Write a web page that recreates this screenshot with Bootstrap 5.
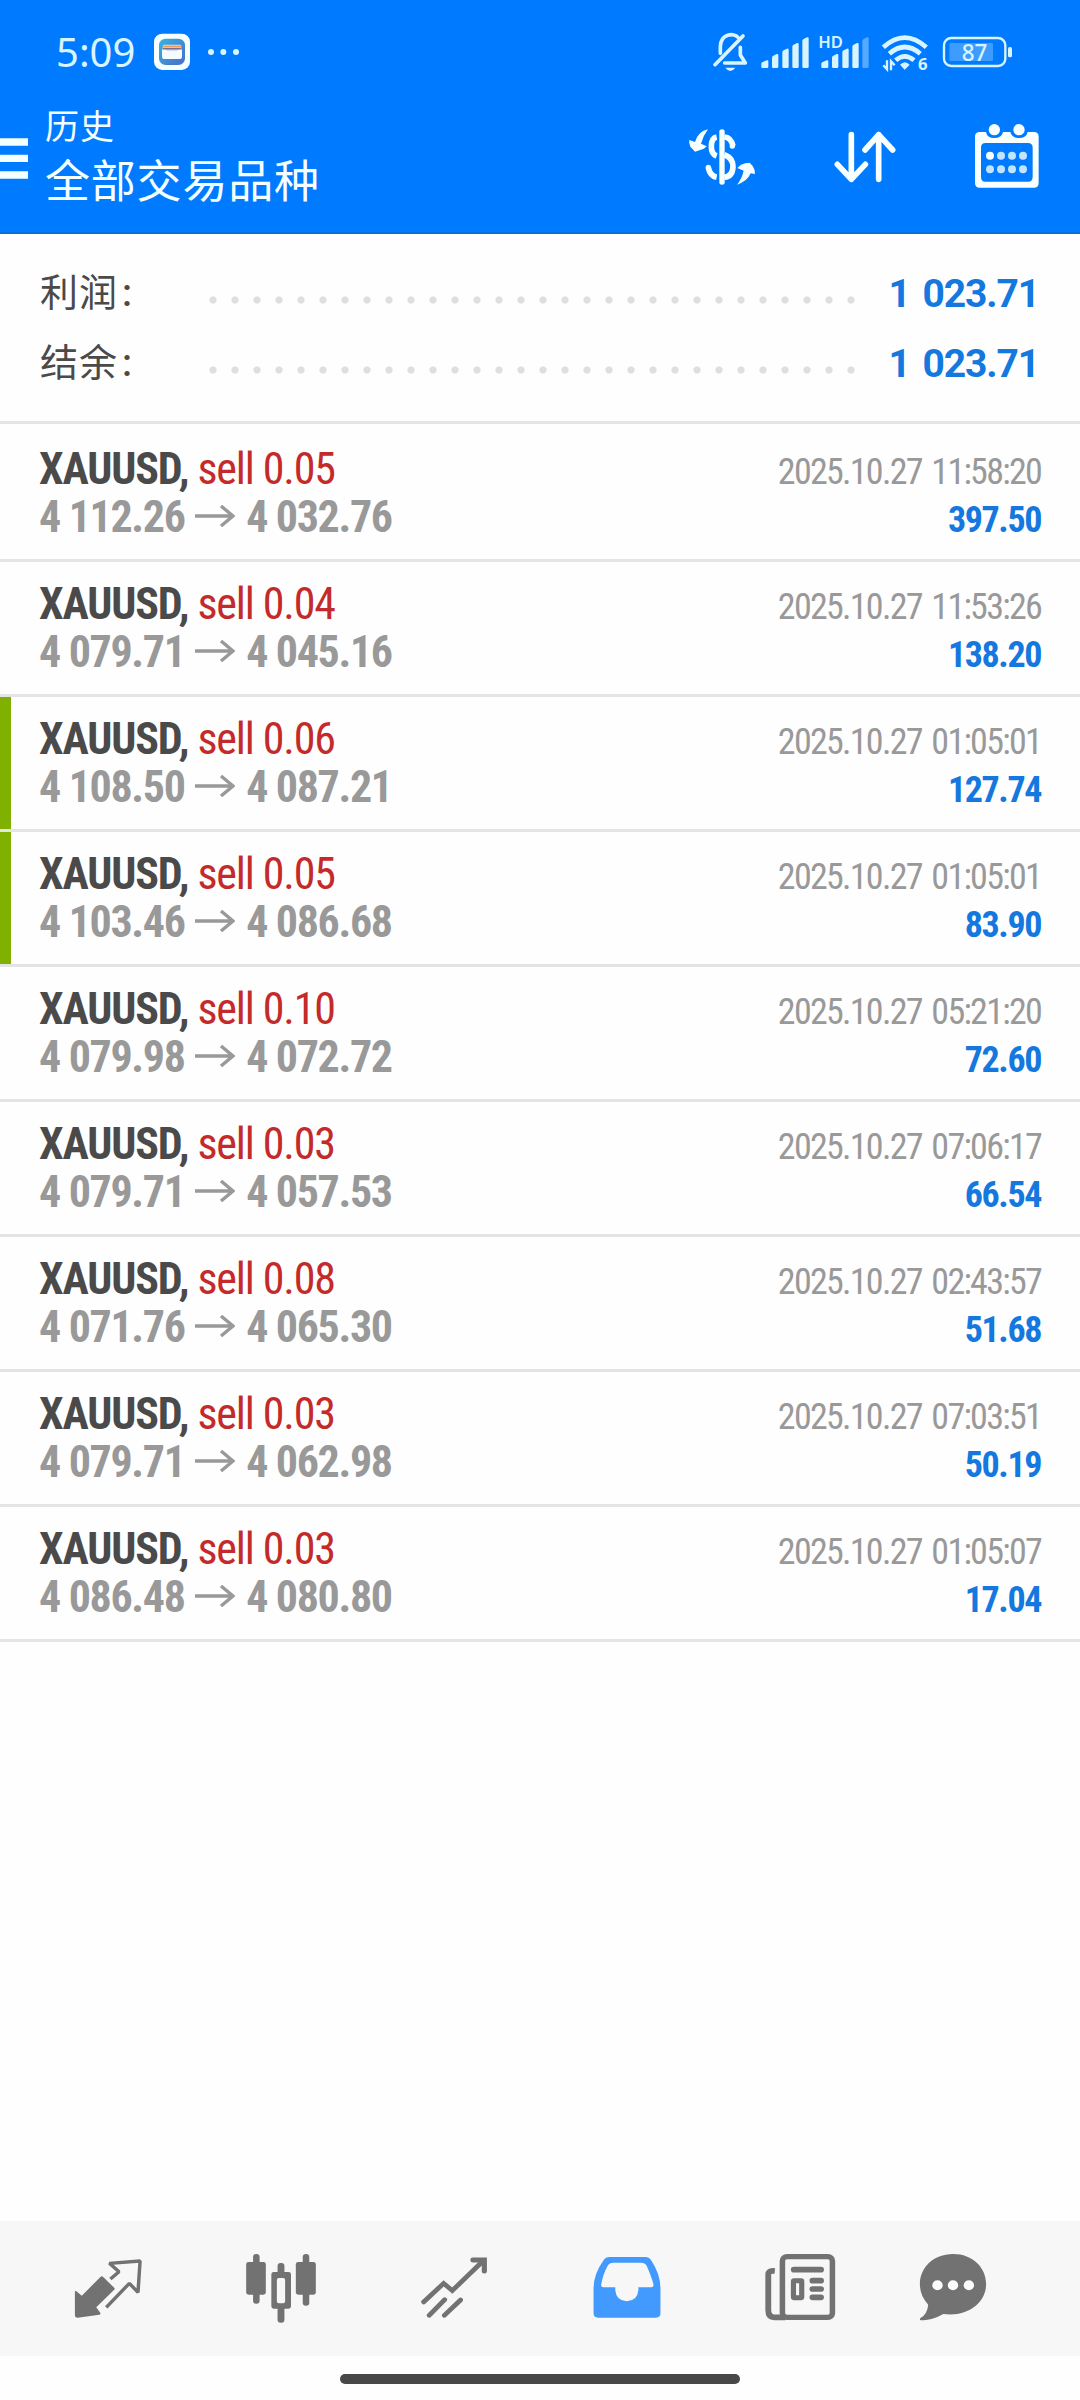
<!DOCTYPE html>
<html lang="zh-CN">
<head>
<meta charset="utf-8">
<meta name="viewport" content="width=device-width, initial-scale=1">
<title>历史</title>
<link href="https://cdn.jsdelivr.net/npm/bootstrap@5.3.0/dist/css/bootstrap.min.css" rel="stylesheet">
<style>
  body { font-family: Roboto, "Noto Sans CJK SC", sans-serif; background: #fefefe; }
  .phone { width: 1080px; height: 2400px; }
  .topbar { height: 234px; background: #007aff; color: #f4ffff; border-bottom: 2px solid #0a6fd9; }
  .status { height: 104px; padding: 0 65px 0 56px; }
  .clock { font: 400 40px/40px "Noto Sans", sans-serif; color: #d8f5ff; width: 97px; }
  .titles { padding: 2px 0 0 17px; }
  .title-small { font-size: 34px; line-height: 42px; letter-spacing: 1px; }
  .title-big { font-size: 45px; line-height: 58px; letter-spacing: .8px; margin-top: 6px; }
  .burger { width: 28px; height: 41px; margin-top: 34px; }
  .tools { margin-right: 2px; padding-top: 12px; }
  .tool { width: 142px; }
  .summary { height: 190px; padding: 24px 41px 0 40px; border-bottom: 3px solid #e4e4e4; }
  .sum-line { height: 70px; }
  .sum-label { width: 162px; font-size: 38px; line-height: 70px; color: #4a4a4a; letter-spacing: 1px; }
  .colon { margin-left: 4px; font-weight: 500; }
  .leader { width: 660px; height: 8px; margin-top: 13px; background: radial-gradient(circle, #dedede 3.2px, transparent 4px) 0 0 / 22px 8px repeat-x; }
  .sum-value { font-size: 39px; line-height: 72px; color: #1478de; letter-spacing: -1.1px; word-spacing: 4px; padding-top: 1px; }
  .deal { height: 135px; padding: 18px 39px 0 39px; border-bottom: 3px solid #e4e4e4; line-height: 47.5px; white-space: nowrap; }
  .deal:first-child { height: 138px; padding-top: 21px; }
  .marked { background: linear-gradient(#80b000, #80b000) 0 0 / 11px 100% no-repeat; }
  .left-col { padding-top: 1px; }
  .cond { font-stretch: 75%; width: max-content; }
  .big { font-size: 44px; letter-spacing: -1.15px; }
  .price { letter-spacing: -1.35px; }
  .mid { font-size: 36px; letter-spacing: -1.72px; word-spacing: 3px; }
  .gain { color: #1478de; letter-spacing: -1.4px; }
  .sym { color: #4a4a4a; } .side { color: #c42a2a; } .dim { color: #999; }
  .arrow { width: 40px; height: 22px; margin: 0 2px 7px; }
  .bottom { height: 135px; background: #f7f7f7; padding-left: 21.5px; color: #727272; }
  .bottom svg { width: 80px; height: 77.3px; }
  .tab { width: 173px; } .tab:last-child { width: 132px; }
  .gesture { height: 44px; padding-top: 17.5px; }
  .gesture div { width: 400px; height: 10.5px; background: #484848; }
</style>
<script src="https://cdn.jsdelivr.net/npm/bootstrap@5.3.0/dist/js/bootstrap.bundle.min.js"></script>
</head>
<body>
<div class="phone d-flex flex-column overflow-hidden">
  <header class="topbar flex-shrink-0">
    <div class="status d-flex align-items-center">
      <div class="clock">5:09</div>
      <svg width="90" height="42" viewBox="456 93 270 126">
        <defs><linearGradient id="g" x1="0" y1="0" x2="1" y2="1"><stop offset="0" stop-color="#36b4e0"/><stop offset="1" stop-color="#4a6cc8"/></linearGradient></defs>
        <rect x="459" y="101" width="108" height="109" rx="25" fill="#f6ffff"/>
        <rect x="474" y="116" width="78" height="79" rx="20" fill="url(#g)"/>
        <rect x="485" y="134" width="56" height="25" rx="4" fill="#d9dcea"/>
        <path d="M486 139h54" stroke="#ee9a55" stroke-width="4"/><path d="M486 146h54" stroke="#7b6a8c" stroke-width="5"/>
        <path d="M483 149h9q3 0 5 4h32q2-4 5-4h9v22q0 6-6 6h-48q-6 0-6-6z" fill="#f4fcff"/>
        <g fill="#d8f5ff"><circle cx="630" cy="156" r="9"/><circle cx="667" cy="156" r="9"/><circle cx="705" cy="156" r="9"/></g>
      </svg>
      <div class="d-flex ms-auto">
        <svg width="45" height="42" viewBox="150 93 135 126" fill="none" stroke="#d8f5ff" stroke-width="11" stroke-linecap="round" stroke-linejoin="round">
          <path d="M181 160V140C182 100 222 98 234 112M241 142V165L256 189H194M165 194L249 108"/><path d="M196 203h30q-15 20-30 0z" fill="#d8f5ff" stroke="none"/>
        </svg>
        <svg width="60" height="42" viewBox="285 93 180 126" fill="#d8f5ff">
          <path d="M304 191q0-3 3-4l13-6q5-1 5 3v16q0 4-4 4h-14q-3 0-3-3zM336 173q0-4 4-6l10-5q5-1 5 3v35q0 4-4 4h-11q-4 0-4-4zM367 157q0-4 4-6l10-5q5-1 5 3v51q0 4-4 4h-11q-4 0-4-4zM397 140q0-4 4-6l10-5q5-1 5 3v68q0 4-4 4h-11q-4 0-4-4zM427 123q0-4 4-6l10-5q5-1 5 3v85q0 4-4 4h-11q-4 0-4-4z"/>
        </svg>
        <svg class="overflow-visible" width="60" height="42" viewBox="465 93 180 126" fill="#d8f5ff">
          <text x="475" y="143" font-family="Noto Sans" font-weight="600" font-size="47" textLength="74" lengthAdjust="spacingAndGlyphs">HD</text>
          <path d="M484 191q0-3 3-4l13-6q5-1 5 3v16q0 4-4 4h-14q-3 0-3-3zM516 173q0-4 4-6l10-5q5-1 5 3v35q0 4-4 4h-11q-4 0-4-4zM547 157q0-4 4-6l10-5q5-1 5 3v51q0 4-4 4h-11q-4 0-4-4zM577 140q0-4 4-6l10-5q5-1 5 3v68q0 4-4 4h-11q-4 0-4-4z"/>
          <path fill="#55a9ff" d="M607 123q0-4 4-6l10-5q5-1 5 3v85q0 4-4 4h-11q-4 0-4-4z"/>
        </svg>
        <svg class="overflow-visible" width="60" height="42" viewBox="645 93 180 126" fill="none" stroke="#d8f5ff" stroke-width="14">
          <path d="M670 142Q734 84 799 142"/><path d="M688 161Q734 121 781 161"/><path d="M707 181Q734 157 762 181"/>
          <path d="M720 194q15-15 29 0l-15 15z" fill="#d8f5ff" stroke="none"/>
          <path d="M681 181v27l-11-12M693 211v-27l11 12" stroke-width="7"/>
          <text x="774" y="210" font-family="Noto Sans" font-weight="700" font-size="50" fill="#d8f5ff" stroke="none">6</text>
        </svg>
        <svg class="overflow-visible" width="80" height="42" viewBox="825 93 240 126">
          <rect x="868" y="129" width="131" height="54" rx="3" fill="#3f9cff"/>
          <rect x="852" y="114" width="184" height="84" rx="22" fill="none" stroke="#d8f5ff" stroke-width="7"/>
          <rect x="1044" y="141" width="12" height="31" rx="5" fill="#d8f5ff"/>
          <text x="905" y="183" font-family="Noto Sans" font-weight="500" font-size="69" textLength="77" lengthAdjust="spacingAndGlyphs" fill="#d8f5ff">87</text>
        </svg>
      </div>
    </div>
    <div class="d-flex align-items-start">
      <svg class="burger flex-shrink-0" viewBox="0 414 84 123" fill="#f4ffff"><path d="M0 415h84v22H0zM0 464h84v22H0zM0 514h84v22H0z"/></svg>
      <div class="titles"><div class="title-small">历史</div><div class="title-big">全部交易品种</div></div>
      <div class="tools d-flex ms-auto">
        <div class="tool text-center"><svg width="80" height="80" viewBox="69 348 240 240" fill="#f8ffff">
          <path d="M178 393q0-5 8-5t8 5v156q0 5-8 5t-8-5z"/>
          <path d="M170 411Q154 414 154 440Q154 462 170 468M193 411Q213 412 219 438M193 464Q220 475 219 501Q217 530 193 532M145 503Q150 528 170 532" fill="none" stroke="#f8ffff" stroke-width="17"/>
          <circle cx="217" cy="438" r="8"/><circle cx="145" cy="502" r="8"/>
          <path d="M144 388Q115 393 105 426L88 420Q86 431 91 440L105 455L132 446L140 439L123 431Q129 408 144 388zM231 554Q262 544 272 520L285 522Q285 508 278 498L269 488Q255 488 243 494L232 504L251 512Q246 535 231 554z"/>
        </svg></div>
        <div class="tool text-center"><svg width="80" height="80" viewBox="495 348 240 240" fill="none" stroke="#f8ffff" stroke-width="17" stroke-linecap="round" stroke-linejoin="round"><path d="M574 404V538M532 493L574 538L616 493M656 538V404M615 450L656 404L698 450"/></svg></div>
        <div class="tool text-center"><svg width="80" height="80" viewBox="921 348 240 240" fill="#f8ffff">
          <path fill-rule="evenodd" d="M959 396H978Q981 414 1003 414Q1025 414 1029 396H1051Q1055 414 1077 414Q1099 414 1103 396H1122Q1136 396 1136 410V548Q1136 563 1122 563H959Q945 563 945 548V410Q945 396 959 396zM976 429Q963 429 963 443V530Q963 545 976 545H1104Q1118 545 1118 530V443Q1118 429 1104 429z"/>
          <circle cx="1003" cy="389" r="17"/><circle cx="1077" cy="389" r="17"/><circle cx="990" cy="467" r="12"/>
          <g fill="#c3e4ff"><circle cx="1023" cy="467" r="12"/><circle cx="1056" cy="467" r="12"/><circle cx="1089" cy="467" r="12"/><circle cx="990" cy="508" r="12"/><circle cx="1023" cy="508" r="12"/><circle cx="1056" cy="508" r="12"/><circle cx="1089" cy="508" r="12"/></g>
        </svg></div>
      </div>
    </div>
  </header>

  <section class="summary flex-shrink-0">
    <div class="sum-line d-flex align-items-center"><div class="sum-label flex-shrink-0">利润<span class="colon">:</span></div><div class="leader flex-shrink-0"></div><div class="sum-value fw-bold ms-auto">1 023.71</div></div>
    <div class="sum-line d-flex align-items-center"><div class="sum-label flex-shrink-0">结余<span class="colon">:</span></div><div class="leader flex-shrink-0"></div><div class="sum-value fw-bold ms-auto">1 023.71</div></div>
  </section>

  <main id="deals" class="flex-grow-1"></main>

  <nav class="bottom d-flex align-items-center flex-shrink-0">
    <div class="tab text-center"><svg preserveAspectRatio="none" viewBox="199 149 232 232" fill="currentColor">
      <path d="M293 230Q297 226 301 230L333 262Q336 265 333 268L281 321L293 338Q294 342 290 343L227 352Q219 353 219 345V273Q222 270 226 275L239 286z"/>
      <path d="M322 236L347 214L319 189L408 182L402 276L377 249L310 321" fill="none" stroke="currentColor" stroke-width="10" stroke-linejoin="bevel"/>
    </svg></div>
    <div class="tab text-center"><svg preserveAspectRatio="none" viewBox="700 149 232 232" fill="currentColor">
      <rect x="715" y="185" width="57" height="98" rx="7"/><rect x="735" y="161" width="19" height="149" rx="9"/>
      <rect x="859" y="185" width="58" height="98" rx="7"/><rect x="879" y="161" width="19" height="155" rx="9"/>
      <rect x="806" y="188" width="20" height="40" rx="9"/><rect x="806" y="315" width="20" height="52" rx="9"/>
      <path fill-rule="evenodd" d="M795 215H838Q845 215 845 222V318Q845 325 838 325H795Q788 325 788 318V222Q788 215 795 215zM810 233Q804 233 804 239V303Q804 309 810 309H822Q828 309 828 303V239Q828 233 822 233z"/>
    </svg></div>
    <div class="tab text-center"><svg preserveAspectRatio="none" viewBox="1202 149 232 232" fill="none" stroke="currentColor" stroke-width="14" stroke-linecap="round"><path d="M1230 305L1288 249L1313 271L1402 182M1246 345L1291 298M1290 345L1337 299"/><path d="M1373 179H1406V212" stroke-width="15"/></svg></div>
    <div class="tab text-center"><svg preserveAspectRatio="none" viewBox="138 149 232 232" fill="#429aff"><path fill-rule="evenodd" d="M204 170H307Q318 170 324 180Q351 222 351 264V339Q351 352 338 352H170Q157 352 157 339V264Q157 222 186 180Q192 170 204 170zM214 187Q203 187 198 196Q184 222 179 253Q178 261 186 261H220V270Q223 302 253 303Q284 302 287 270V261H324Q332 261 331 253Q326 231 311 196Q306 187 295 187z"/></svg></div>
    <div class="tab text-center"><svg preserveAspectRatio="none" viewBox="641 149 232 232" fill="none" stroke="currentColor">
      <rect x="706" y="169" width="145" height="182" rx="13" stroke-width="16"/>
      <path d="M684 212Q665 210 665 222V330Q665 351 683 351H715" stroke-width="17"/>
      <rect x="738" y="241" width="24" height="51" rx="2" stroke-width="15"/>
      <path d="M739 208H818M793 241H818M793 266H818M793 291H818" stroke-width="17" stroke-linecap="round"/>
    </svg></div>
    <div class="tab text-center"><svg preserveAspectRatio="none" viewBox="1083 149 232 232" fill="currentColor"><path d="M1199 161C1257 161 1295 202 1295 252C1295 308 1240 351 1171 341C1148 355 1125 360 1106 360Q1101 360 1104 354Q1125 341 1127 313Q1103 286 1103 252C1103 203 1141 161 1199 161z"/><g fill="#fcfcfc"><circle cx="1154" cy="255" r="15"/><circle cx="1199" cy="255" r="15"/><circle cx="1245" cy="255" r="15"/></g></svg></div>
  </nav>
  <div class="gesture flex-shrink-0"><div class="mx-auto rounded-pill"></div></div>
</div>
<script>
  const deals = [
    ["0.05", "4 112.26", "4 032.76", "11:58:20", "397.50"],
    ["0.04", "4 079.71", "4 045.16", "11:53:26", "138.20"],
    ["0.06", "4 108.50", "4 087.21", "01:05:01", "127.74", true],
    ["0.05", "4 103.46", "4 086.68", "01:05:01", "83.90", true],
    ["0.10", "4 079.98", "4 072.72", "05:21:20", "72.60"],
    ["0.03", "4 079.71", "4 057.53", "07:06:17", "66.54"],
    ["0.08", "4 071.76", "4 065.30", "02:43:57", "51.68"],
    ["0.03", "4 079.71", "4 062.98", "07:03:51", "50.19"],
    ["0.03", "4 086.48", "4 080.80", "01:05:07", "17.04"]
  ];
  document.getElementById("deals").innerHTML = deals.map(([lot, open, close, time, profit, marked]) => `
    <div class="deal d-flex justify-content-between${marked ? " marked" : ""}">
      <div class="left-col">
        <div class="cond big"><span class="sym fw-bold">XAUUSD,</span> <span class="side">sell ${lot}</span></div>
        <div class="cond big price dim fw-bold">${open} <svg class="arrow" viewBox="0 0 40 22" fill="none" stroke="#999" stroke-width="3.4"><path d="M0 11H38M26 1L38 11L26 21"/></svg> ${close}</div>
      </div>
      <div class="d-flex flex-column align-items-end pt-1">
        <div class="cond mid dim">2025.10.27 ${time}</div>
        <div class="cond mid gain fw-bold">${profit}</div>
      </div>
    </div>`).join("");
</script>
</body>
</html>
